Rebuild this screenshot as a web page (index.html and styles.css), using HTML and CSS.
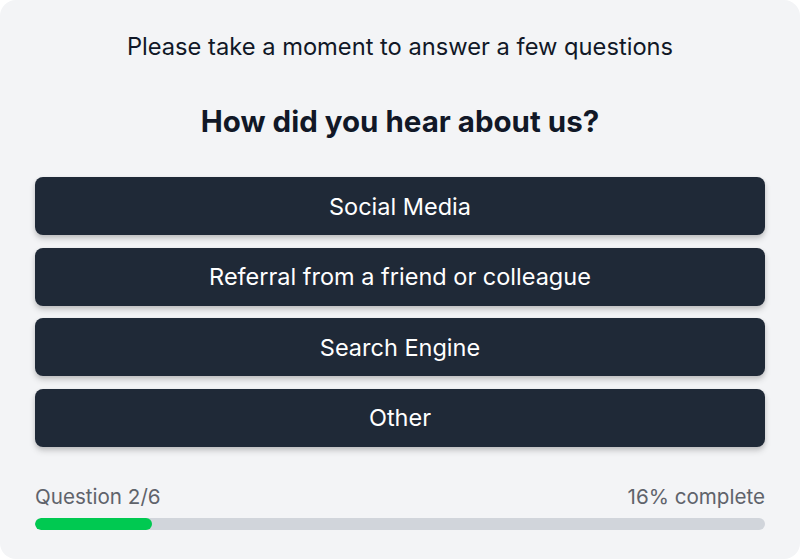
FILE: index.html
```html
<!DOCTYPE html>
<html lang="en">
<head>
    <meta charset="UTF-8">
    <meta name="viewport" content="width=device-width, initial-scale=1.0">
    <title>Survey</title>
    <link rel="stylesheet" href="styles.css">
</head>
<body>
    <div class="survey">
        <p class="intro">Please take a moment to answer a few questions</p>
        <h1 class="question">How did you hear about us?</h1>

        <div class="options">
            <button class="option">Social Media</button>
            <button class="option">Referral from a friend or colleague</button>
            <button class="option">Search Engine</button>
            <button class="option">Other</button>
        </div>

        <div class="progress">
            <div class="progress-info">
                <span>Question 2/6</span>
                <span>16% complete</span>
            </div>
            <div class="progress-track">
                <div class="progress-fill" style="width: 16%"></div>
            </div>
        </div>
    </div>
</body>
</html>
```

FILE: styles.css
```css
body {
    margin: 0;
    background: #ffffff;
    font-family: Inter, "Noto Sans", Arial, sans-serif;
}

.survey {
    box-sizing: border-box;
    height: 559px;
    background: #f3f4f6;
    border-radius: 16px;
    padding: 33px 35px 0;
    display: flex;
    flex-direction: column;
}

.intro {
    margin: 0;
    text-align: center;
    font-size: 23.7px;
    line-height: 28px;
    color: #111827;
}

.question {
    margin: 42px 0 0;
    text-align: center;
    font-size: 29.5px;
    line-height: 36px;
    font-weight: 700;
    color: #111827;
}

.options {
    margin-top: 38px;
    display: flex;
    flex-direction: column;
    gap: 12.5px;
}

.option {
    height: 58px;
    border: none;
    border-radius: 8px;
    background: #1f2937;
    color: #ffffff;
    font-family: inherit;
    font-size: 23.5px;
    cursor: pointer;
    box-shadow: 0 4px 6px rgba(0, 0, 0, 0.15), 0 2px 4px rgba(0, 0, 0, 0.1);
}

.progress {
    margin-top: 37.5px;
}

.progress-info {
    display: flex;
    justify-content: space-between;
    font-size: 20.6px;
    line-height: 26px;
    color: #5f636b;
}

.progress-track {
    margin-top: 8px;
    height: 11.5px;
    border-radius: 6px;
    background: #d1d5db;
    overflow: hidden;
}

.progress-fill {
    height: 100%;
    border-radius: 6px;
    background: #00c951;
}
```
